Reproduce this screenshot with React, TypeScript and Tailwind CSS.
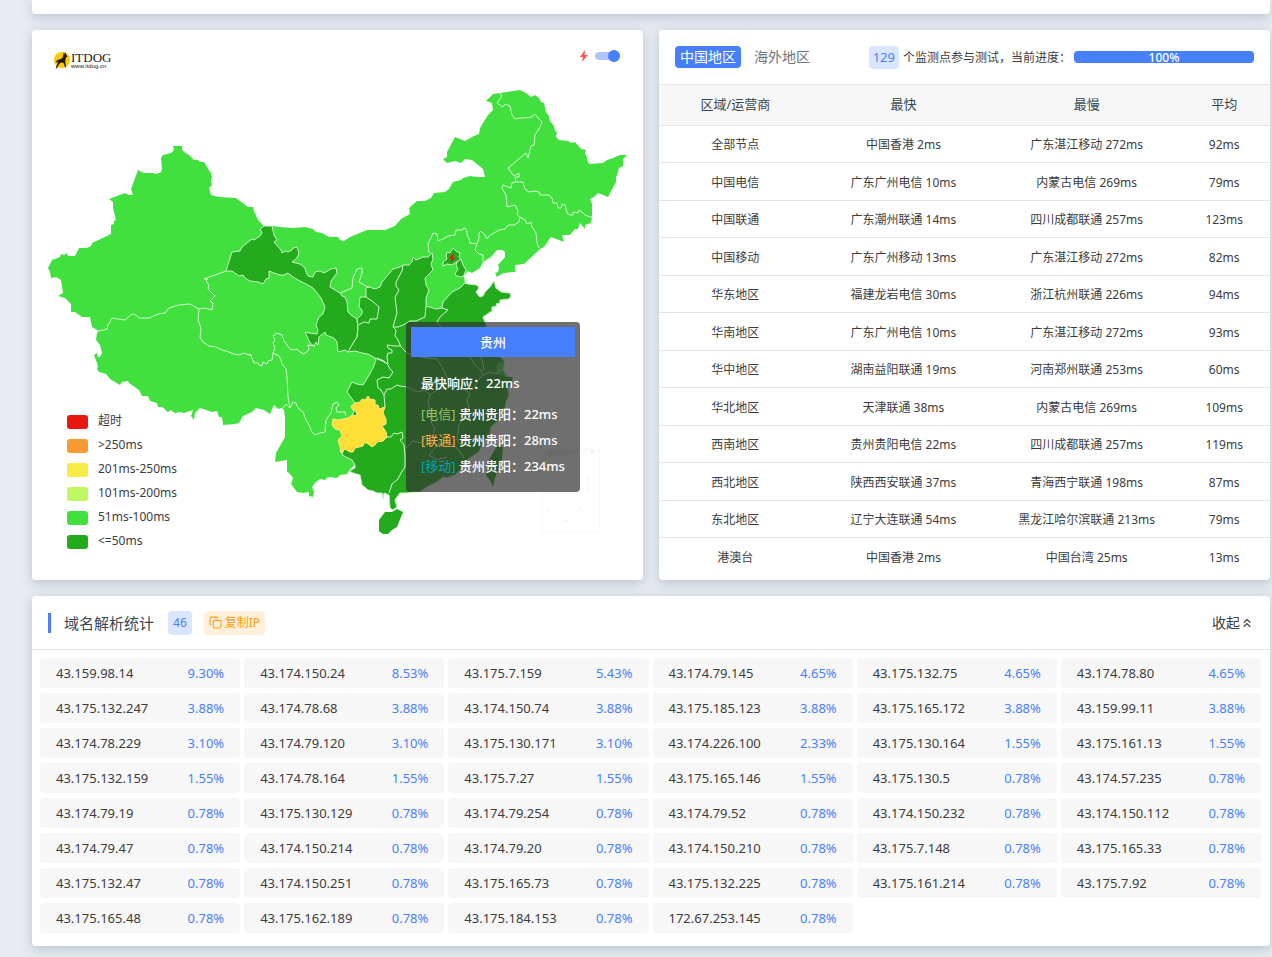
import { ChevronsUp, Copy } from "lucide-react";

const legend = [
  { label: "超时", color: "bg-[#e8170f]" },
  { label: ">250ms", color: "bg-[#f79a34]" },
  { label: "201ms-250ms", color: "bg-[#f6ec45]" },
  { label: "101ms-200ms", color: "bg-[#bff763]" },
  { label: "51ms-100ms", color: "bg-[#42e03f]" },
  { label: "<=50ms", color: "bg-[#24aa1d]" },
];

const regions = [
  ["全部节点", "中国香港 2ms", "广东湛江移动 272ms", "92ms"],
  ["中国电信", "广东广州电信 10ms", "内蒙古电信 269ms", "79ms"],
  ["中国联通", "广东潮州联通 14ms", "四川成都联通 257ms", "123ms"],
  ["中国移动", "广东广州移动 13ms", "广东湛江移动 272ms", "82ms"],
  ["华东地区", "福建龙岩电信 30ms", "浙江杭州联通 226ms", "94ms"],
  ["华南地区", "广东广州电信 10ms", "广东湛江移动 272ms", "93ms"],
  ["华中地区", "湖南益阳联通 19ms", "河南郑州联通 253ms", "60ms"],
  ["华北地区", "天津联通 38ms", "内蒙古电信 269ms", "109ms"],
  ["西南地区", "贵州贵阳电信 22ms", "四川成都联通 257ms", "119ms"],
  ["西北地区", "陕西西安联通 37ms", "青海西宁联通 198ms", "87ms"],
  ["东北地区", "辽宁大连联通 54ms", "黑龙江哈尔滨联通 213ms", "79ms"],
  ["港澳台", "中国香港 2ms", "中国台湾 25ms", "13ms"],
];

const ips = [
  ["43.159.98.14", "9.30%"], ["43.174.150.24", "8.53%"], ["43.175.7.159", "5.43%"],
  ["43.174.79.145", "4.65%"], ["43.175.132.75", "4.65%"], ["43.174.78.80", "4.65%"],
  ["43.175.132.247", "3.88%"], ["43.174.78.68", "3.88%"], ["43.174.150.74", "3.88%"],
  ["43.175.185.123", "3.88%"], ["43.175.165.172", "3.88%"], ["43.159.99.11", "3.88%"],
  ["43.174.78.229", "3.10%"], ["43.174.79.120", "3.10%"], ["43.175.130.171", "3.10%"],
  ["43.174.226.100", "2.33%"], ["43.175.130.164", "1.55%"], ["43.175.161.13", "1.55%"],
  ["43.175.132.159", "1.55%"], ["43.174.78.164", "1.55%"], ["43.175.7.27", "1.55%"],
  ["43.175.165.146", "1.55%"], ["43.175.130.5", "0.78%"], ["43.174.57.235", "0.78%"],
  ["43.174.79.19", "0.78%"], ["43.175.130.129", "0.78%"], ["43.174.79.254", "0.78%"],
  ["43.174.79.52", "0.78%"], ["43.174.150.232", "0.78%"], ["43.174.150.112", "0.78%"],
  ["43.174.79.47", "0.78%"], ["43.174.150.214", "0.78%"], ["43.174.79.20", "0.78%"],
  ["43.174.150.210", "0.78%"], ["43.175.7.148", "0.78%"], ["43.175.165.33", "0.78%"],
  ["43.175.132.47", "0.78%"], ["43.174.150.251", "0.78%"], ["43.175.165.73", "0.78%"],
  ["43.175.132.225", "0.78%"], ["43.175.161.214", "0.78%"], ["43.175.7.92", "0.78%"],
  ["43.175.165.48", "0.78%"], ["43.175.162.189", "0.78%"], ["43.175.184.153", "0.78%"],
  ["172.67.253.145", "0.78%"],
];

const mainland =
  "48,268 52,260 60,257 61,254 64,255 67,253 68,256 75,256 79,248 87,248 91,246 92,243 111,234 111,225 114,224 114,221 116,220 113,208 113,202 109,199 125,193 129,195 133,195 131,189 138,170 144,173 153,173 156,174 161,172 162,169 161,158 163,155 171,153 174,150 173,146 182,146 182,149 184,152 189,155 194,160 198,160 200,162 204,162 206,165 208,169 211,173 212,177 211,181 212,185 209,188 211,195 219,197 236,198 248,207 253,207 254,211 258,220 263,225 264,226 272,226 280,227 293,228 305,227 313,229 316,232 322,233 329,237 338,237 340,240 344,241 350,237 367,230 385,230 395,226 401,219 410,214 409,208 417,201 425,201 431,198 434,193 445,192 449,189 453,182 461,180 463,178 470,176 476,177 485,177 483,169 472,160 465,159 461,163 455,161 447,163 443,159 447,157 447,152 455,137 465,141 474,136 479,134 480,128 488,115 493,110 492,103 486,101 493,94 500,93 520,90 526,93 531,97 535,95 539,98 541,102 544,103 546,112 549,116 550,121 554,126 555,131 557,132 556,137 559,140 568,141 571,143 575,142 581,149 586,150 585,153 587,157 587,159 589,164 603,163 607,160 613,158 620,155 627,155 623,159 623,166 619,168 616,178 616,182 608,197 598,193 594,197 590,199 592,204 592,217 591,223 585,225 585,229 580,223 578,229 575,229 570,235 562,235 564,242 551,237 544,247 540,249 537,252 524,264 515,265 515,272 503,273 497,277 495,273 498,272 499,268 498,265 505,257 505,252 502,250 497,250 491,257 483,262 480,268 472,273 468,271 464,276 465,283 460,290 442,310 420,330 400,345 386,430 349,471 347,474 340,475 337,478 328,477 325,480 320,479 315,483 312,487 314,492 313,497 309,496 309,492 303,493 297,492 291,484 293,478 289,473 287,472 287,460 275,462 276,453 285,437 285,418 284,410 282,408 278,409 274,405 270,414 264,410 256,408 252,412 243,416 239,423 235,424 223,425 222,417 219,417 217,411 212,412 200,408 195,413 194,420 191,416 193,410 184,413 180,412 175,413 171,410 168,412 166,411 165,409 162,407 158,407 157,403 150,401 148,396 142,396 139,390 129,383 128,381 122,382 120,385 110,379 106,374 99,372 97,369 98,366 94,355 97,353 98,357 100,357 102,353 100,345 96,340 97,333 99,331 92,327 90,317 82,317 75,312 71,312 71,304 65,298 58,296 63,293 61,280 56,277 51,278 50,272";

const gansu =
  "272,226 274,235 277,240 274,242 281,250 282,253 285,251 288,252 292,250 293,248 297,247 299,253 297,258 292,262 300,264 305,268 306,272 308,276 313,277 315,272 320,271 324,273 331,269 336,268 337,273 331,281 330,287 340,293 342,296 345,297 347,302 348,312 351,315 357,319 358,328 357,337 352,345 354,348 348,352 345,350 338,352 337,342 334,338 326,335 325,332 319,337 318,345 316,342 314,346 310,343 305,332 309,333 317,334 318,330 316,325 319,317 323,314 325,307 321,298 313,288 308,285 300,281 293,277 288,273 284,275 280,275 274,273 269,271 269,278 266,279 263,284 258,282 250,281 245,278 243,275 239,276 232,271 226,271 232,252 240,251 242,247 252,239 254,240 260,236 262,233 260,229 264,226";

const east =
  "357,319 362,314 362,310 359,307 360,297 366,297 366,288 369,287 375,289 380,287 382,282 393,269 400,267 403,265 409,265 412,262 413,257 416,260 423,257 428,257 432,253 433,259 431,264 433,270 425,278 426,285 429,290 426,298 426,306 436,309 442,308 443,302 452,292 460,288 465,283 468,284 477,285 479,288 476,292 478,295 480,297 483,296 485,292 490,287 494,281 496,288 501,292 510,293 511,296 509,299 500,300 500,303 496,304 497,306 492,307 492,311 483,317 485,322 490,335 497,345 500,357 504,360 504,365 502,370 505,376 513,377 512,382 508,388 509,395 506,402 505,408 500,413 499,420 491,427 490,433 488,438 484,440 482,445 479,452 474,455 467,460 460,470 455,475 447,478 443,477 437,482 427,487 420,492 413,492 407,493 400,493 397,497 395,500 397,507 393,510 390,508 389,495 384,493 383,499 382,493 377,493 373,491 368,490 362,485 360,475 353,473 349,471 355,468 355,465 352,460 342,455 350,430 355,403 347,392 349,388 352,382 357,384 363,385 368,377 373,368 376,360 375,358 368,354 362,353 355,351 348,352 352,345 357,337 358,328";

const guizhou =
  "368,396 370,399 375,400 375,405 378,405 379,409 385,407 383,413 386,419 386,424 382,426 386,432 387,437 383,441 377,442 375,445 372,447 367,443 364,443 363,446 355,448 353,452 350,452 345,449 341,453 340,447 338,440 342,436 340,430 335,429 332,425 333,419 338,420 348,418 352,415 356,416 357,413 352,409 351,406 355,403 360,402 362,399 365,400";

// province borders, drawn over the filled areas
const borders = [
  "99,331 107,329 108,325 112,318 118,319 125,320 132,314 136,315 139,318 149,318 158,314 165,313 169,308 179,305 190,304 195,307 199,309 204,308 212,310 213,303 210,301 215,296 208,289 209,285 206,281 208,279 204,279 226,271",
  "199,309 198,320 200,325 201,330 200,337 203,342 209,346 216,347 222,350 226,351 234,354 239,355 244,353 252,356 250,354 254,363 258,363 259,365 262,366 263,362 267,364 268,361 272,360 273,353 275,348 273,343 275,340 273,336 277,333 282,335 284,341 287,345 291,350 297,349 300,352 304,354 309,350 308,345 315,346",
  "273,353 279,356 281,360 282,364 286,369 287,377 288,397 290,408 293,402 296,403 298,408 303,412 306,420 308,423 312,432 315,435 320,433 325,432 326,420 331,413 333,404 337,402 339,405 336,408 337,412 345,412 346,416",
  "283,408 286,404 290,408",
  "340,293 352,288 353,278 357,269 362,268 362,273 359,282 366,286 369,287",
  "429,253 428,243 430,240 433,233 437,234 438,241 445,238 448,236 455,235 456,230 461,230 465,228 467,231 467,235 469,238 470,243 477,244 475,250 479,254 483,255 483,261",
  "477,244 479,238 479,233 481,231 485,235 487,239 489,236 499,230 505,229 508,225 514,225 519,222 520,217 525,220 527,224 531,222 532,227 536,233 537,243 539,248",
  "520,217 517,215 518,211 515,205 507,207 506,195 502,188 503,185 511,188 512,183 516,182 515,177 519,177 519,173 514,176 508,168 526,153 528,158 531,146 534,145 535,135 540,127 542,122 539,119 535,114 532,117 524,118 520,118 515,119 512,115 510,106 505,104 503,107 497,103 502,96 500,93",
  "516,182 523,182 525,189 529,192 535,191 539,192 540,195 543,195 549,195 552,198 553,203 557,203 558,208 561,208 562,204 565,205 567,213 570,215 573,215 573,212 578,213 579,210 583,213 585,215 590,217 592,217",
  "403,265 402,271 396,282 396,286 399,290 395,297 397,313 393,327 396,330 395,336 398,340 401,347 407,353 420,357",
  "393,327 398,327 403,325 410,321 416,321 425,317 426,306",
  "400,346 395,346 387,345 388,348 392,350 392,353 388,353 387,357 388,364 382,361 375,358",
  "366,297 372,301 379,307 377,319 370,319 369,323 364,322 358,325",
  "442,308 448,310 440,317 437,322",
  "377,358 384,361 388,365 390,369 393,372 389,378 383,377 377,380 378,388 381,390 384,395 387,389 391,389 397,385 400,386 407,387 418,392 425,390 430,395",
  "384,395 385,407",
  "387,437 391,437 394,433 397,434 402,432 403,438 400,440 404,445 405,455 405,467 401,473 398,479 392,484 389,493",
  "430,395 428,402 430,411 432,425 435,428 432,440",
  "430,395 440,388 448,388 455,386 463,388 470,394 467,400 469,408 464,418 459,425 457,440 462,446",
  "420,357 437,359 442,367 446,375 450,385 457,386",
  "406,448 413,441 421,443 425,438 431,442 439,445 447,442 457,448 464,458",
  "470,357 475,365 481,370 483,375 478,380 474,388",
  "483,375 490,372 496,374 502,370",
  "437,322 443,330 450,333 459,335 470,342 477,350 482,360 484,370",
  "440,442 434,449 429,455 437,460 447,457",
];

const ChinaMap = () => (
  <svg viewBox="32 30 611 550" className="w-full block" aria-hidden="true">
    <polygon points={mainland} fill="#42e03f" />
    <g fill="#24aa1d" stroke="#c9f3c5" strokeWidth="1" strokeLinejoin="round">
      <polygon points={gansu} />
      <polygon points={east} />
      <polygon points="443,262 447,259 446,256 447,252 450,253 453,248 456,251 460,253 459,257 461,260 456,262 452,265 447,264 443,266" />
      <polygon points="457,262 461,259 463,265 466,270 463,277 457,276 455,274 458,269 456,265" />
      <polygon points="379,520 385,512 392,512 397,509 403,512 397,527 392,530 388,534 383,534 379,531" stroke="none" />
      <polygon points="497,446 503,447 502,458 495,478 493,487 491,482 486,475 487,466 491,456" stroke="none" />
    </g>
    <polygon points="497,363 504,361 503,370 507,376 496,374" fill="#42e03f" />
    <g fill="none" stroke="#d2f8cf" strokeWidth="1" strokeLinejoin="round">
      {borders.map((points, i) => (
        <polyline key={i} points={points} />
      ))}
    </g>
    <polygon points={guizhou} fill="#ffdf36" stroke="#ffe98a" />
    <path d="M452.500 254l-3.500 5h2.500l-1 4 4.500-5.500h-2.500l1-3z" fill="#f5140c" />
    {/* South China Sea inset */}
    <g stroke="#f8f8f8" fill="none">
      <rect x="542.5" y="449.5" width="57" height="82" />
      <path d="M547 508l3 5M563 523l5-3M577 512l4-5M587 492l3-6M588 475v8" stroke="#f2f2f2" />
      <path d="M544 450h36c-8 5-20 7-34 6zM590 450h5l-3 5z" fill="#ececec" />
    </g>
  </svg>
);

const Logo = () => (
  <div className="absolute left-[22px] top-[21px] flex items-center gap-px text-[#231815]">
    <svg viewBox="0 0 16 18" className="w-4 h-[18px]" aria-hidden="true">
      <circle cx="8" cy="9" r="8" fill="#fccb00" />
      <path
        d="M9.800 1l.9 2 .8-1.800.6 2.400 1.700 1.800-1.700.6-.6 2.600-.3 2.400.9 5.200h-1.100l-1.500-4.400-2.700-.3-2 2-1.500 3.300-1.700.9 1.200-3.400 1-2.400-.4-1.700-1.200 1.500-.7-.5 1.800-2.200 3.600-1 1.600-1.200.8-2.800z"
        fill="#231815"
      />
    </svg>
    <div>
      <div className="font-['Liberation_Serif',serif] text-[13px] leading-[11px]">ITDOG</div>
      <div className="font-['Liberation_Sans',sans-serif] text-[6px] leading-[6px]">www.itdog.cn</div>
    </div>
  </div>
);

const Tooltip = () => (
  <div className="absolute left-[374px] top-[292px] w-[174px] rounded bg-[#323232]/70 p-[5px] pb-[13px] text-white text-[13px] font-medium">
    <div className="bg-[#4680ff] text-center leading-[30px]">贵州</div>
    <div className="pl-[10px] whitespace-nowrap leading-[26px]">
      <p className="mt-[13px] mb-[5px]">最快响应：22ms</p>
      <p><span className="text-[#8ec95a] font-normal">[电信]</span> 贵州贵阳：22ms</p>
      <p><span className="text-[#ffad46] font-normal">[联通]</span> 贵州贵阳：28ms</p>
      <p><span className="text-[#00a7b5] font-normal">[移动]</span> 贵州贵阳：234ms</p>
    </div>
  </div>
);

const card = "bg-white rounded shadow-[0_3px_12px_rgba(90,115,140,0.35)]";

const App = () => {
  return (
    <div
      lang="zh-CN"
      className="min-h-screen bg-[#e8ecf1] pl-8 pr-[2px] pb-[11px] font-['Noto_Sans','Noto_Sans_CJK_SC',sans-serif] text-[#3c3c3c]"
    >
      <div className={`${card} h-[14px] rounded-t-none`} />

      <div className="grid grid-cols-2 gap-4 mt-4">
        {/* Map */}
        <section className={`${card} relative`}>
          <ChinaMap />
          <Logo />
          <div className="absolute right-[23px] top-5 flex items-center gap-[7px]">
            <svg viewBox="0 0 8 12" className="w-2 h-3" aria-hidden="true">
              <path d="M5 0L0 7h3L2 12l6-7H4.600z" fill="#ff5252" />
            </svg>
            <input
              type="checkbox"
              defaultChecked
              aria-label="自动刷新"
              className="relative appearance-none w-[25px] h-2 rounded-full bg-[#afc7ff] before:absolute before:right-0 before:-top-[2px] before:size-3 before:rounded-full before:bg-[#4680ff]"
            />
          </div>
          <ul className="absolute left-[35px] top-[379px] text-xs leading-6">
            {legend.map((item) => (
              <li key={item.label} className="flex items-center gap-[10px]">
                <span className={`w-[21px] h-[14px] mt-[2px] rounded-[3px] ${item.color}`} />
                {item.label}
              </li>
            ))}
          </ul>
          <Tooltip />
        </section>

        {/* Regions */}
        <section className={`${card} overflow-hidden`}>
          <div className="h-[55px] px-4 flex items-center border-b border-[#e2e5e9] whitespace-nowrap">
            <button className="rounded bg-[#4680ff] text-white text-sm leading-[22px] px-[5px]">中国地区</button>
            <button className="text-sm leading-[22px] ml-[13px] text-[#6c757d]">海外地区</button>
            <span className="ml-auto rounded bg-[#dae6ff] text-[#4680ff] text-[13px] leading-[23px] px-1">129</span>
            <span className="ml-1 text-xs pt-px">个监测点参与测试，当前进度：</span>
            <div className="ml-[3px] w-[180px] h-3 rounded bg-[#4680ff] text-white text-xs font-medium leading-[14px] text-center">
              100%
            </div>
          </div>
          <table className="w-full table-fixed border-separate border-spacing-0 text-xs text-center">
            <thead>
              <tr className="h-[41px] bg-[#f7f7f7] text-[13px] text-[#37474f]">
                <th className="w-[25%] p-0 font-normal border-b border-[#e2e5e9]">区域/运营商</th>
                <th className="w-[30%] p-0 font-normal border-b border-[#e2e5e9]">最快</th>
                <th className="w-[30%] p-0 font-normal border-b border-[#e2e5e9]">最慢</th>
                <th className="w-[15%] p-0 font-normal border-b border-[#e2e5e9]">平均</th>
              </tr>
            </thead>
            <tbody className="[&>tr:last-child>td]:border-0">
              {regions.map((row) => (
                <tr key={row[0]} className="odd:h-[37px] even:h-[38px]">
                  {row.map((cell, i) => (
                    <td key={i} className="p-0 pt-[2px] border-b border-[#e2e5e9]">{cell}</td>
                  ))}
                </tr>
              ))}
            </tbody>
          </table>
        </section>
      </div>

      {/* Resolved IPs */}
      <section className={`${card} mt-4 pb-[13px]`}>
        <div className="h-[54px] px-4 flex items-center border-b border-[#e2e5e9]">
          <h2 className="border-l-[3px] border-[#4680ff] pl-[13px] text-[15px] leading-5 text-[#37474f]">域名解析统计</h2>
          <span className="ml-[14px] rounded bg-[#dae6ff] text-[#4680ff] text-xs leading-6 px-[5px]">46</span>
          <button className="ml-3 rounded bg-[#ffefdb] text-[#ff9f0a] text-xs leading-6 px-[5px] flex items-center gap-[3px]">
            <Copy size={13} />
            复制IP
          </button>
          <button className="ml-auto text-sm flex items-center">
            收起
            <ChevronsUp size={14} strokeWidth={2} />
          </button>
        </div>
        <ul className="grid grid-cols-6 gap-x-1 gap-y-[5px] pl-2 pr-[9px] pt-2 text-[13px]">
          {ips.map(([ip, share]) => (
            <li key={ip} className="flex justify-between rounded bg-[#f7f7f7] px-4 leading-[30px]">
              <span>{ip}</span>
              <span className="text-[#4680ff]">{share}</span>
            </li>
          ))}
        </ul>
      </section>
    </div>
  );
};

export default App;
